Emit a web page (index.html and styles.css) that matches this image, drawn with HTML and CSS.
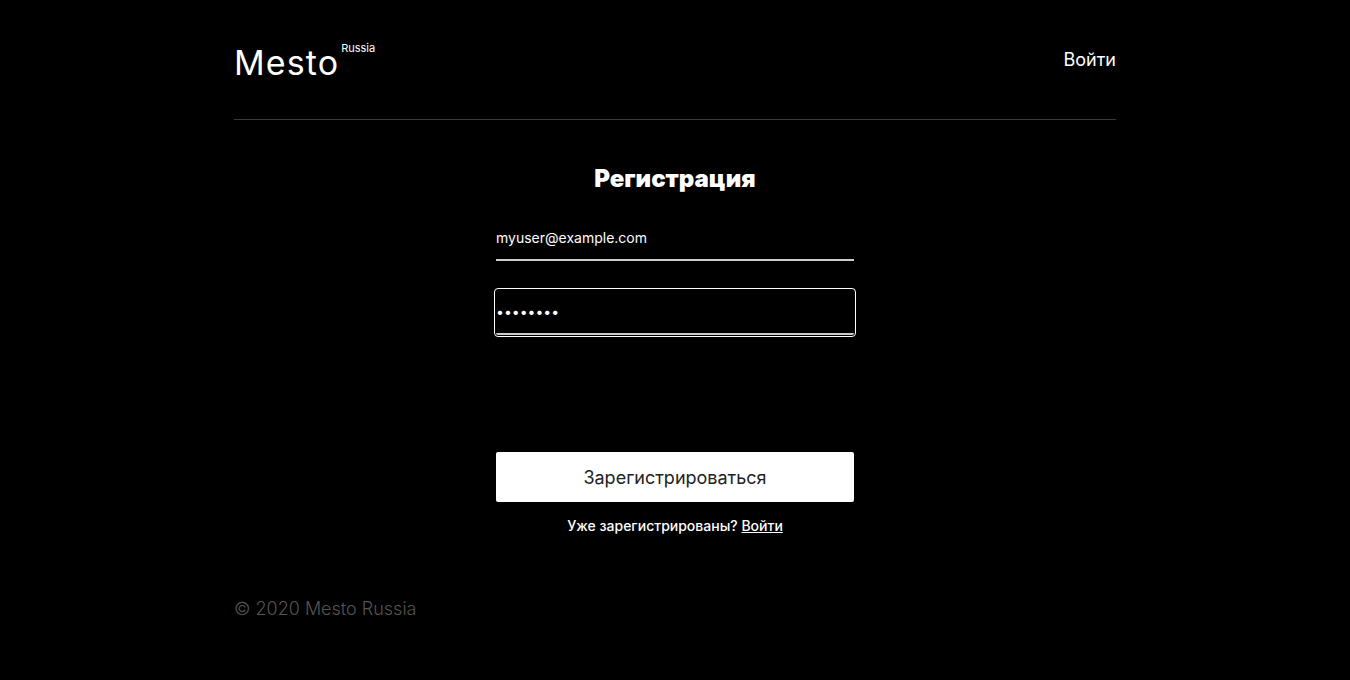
FILE: index.html
```html
<!DOCTYPE html>
<html lang="ru">
<head>
<meta charset="utf-8">
<title>Mesto Russia</title>
<link rel="stylesheet" href="styles.css">
</head>
<body>
<div class="page">
  <header class="header">
    <div class="logo">
      <span class="logo__main">Mesto</span><span class="logo__sub">Russia</span>
    </div>
    <a class="header__link" href="#">Войти</a>
  </header>
  <main class="auth">
    <h1 class="auth__title">Регистрация</h1>
    <form class="auth__form">
      <input class="auth__input" type="email" value="myuser@example.com">
      <input class="auth__input auth__input_focused" type="password" value="12345678">
      <button class="auth__button" type="button">Зарегистрироваться</button>
    </form>
    <p class="auth__hint">Уже зарегистрированы? <a class="auth__hint-link" href="#">Войти</a></p>
  </main>
  <footer class="footer">© 2020 Mesto Russia</footer>
</div>
</body>
</html>
```
FILE: styles.css
```css
html, body {
  margin: 0;
  padding: 0;
  background: #000;
  color: #fff;
  font-family: Inter, "Noto Sans", sans-serif;
}
.page {
  width: 882px;
  margin: 0 auto;
  display: flex;
  flex-direction: column;
}
.header {
  height: 120px;
  border-bottom: 1px solid rgba(84, 84, 84, 0.7);
  display: flex;
  justify-content: space-between;
  align-items: flex-start;
  box-sizing: border-box;
  padding-top: 41px;
}
.logo {
  display: flex;
  align-items: flex-start;
  margin-top: 1px;
}
.logo__main {
  font-size: 34px;
  line-height: 41px;
  letter-spacing: 1.1px;
}
.logo__sub {
  font-size: 11px;
  line-height: 13px;
  margin-left: 2px;
  margin-top: 0;
}
.header__link {
  color: #fff;
  text-decoration: none;
  font-size: 18px;
  line-height: 22px;
  margin-top: 8px;
}
.auth {
  width: 358px;
  margin: 0 auto;
  display: flex;
  flex-direction: column;
  align-items: center;
}
.auth__title {
  margin: 44px 0 0;
  font-size: 24px;
  line-height: 29px;
  font-weight: 900;
}
.auth__form {
  width: 100%;
  display: flex;
  flex-direction: column;
  margin-top: 23px;
}
.auth__input {
  box-sizing: border-box;
  width: 100%;
  height: 45px;
  background: transparent;
  border: none;
  border-bottom: 2px solid #ccc;
  color: #fff;
  font-family: Inter, "Noto Sans", sans-serif;
  font-size: 14px;
  padding: 0;
  margin: 0 0 29px;
  outline: none;
}
.auth__input_focused {
  outline: 1px solid #fff;
  outline-offset: 1px;
  border-radius: 2px;
}
.auth__button {
  margin-top: 88px;
  height: 50px;
  width: 100%;
  background: #fff;
  color: #222;
  border: none;
  border-radius: 2px;
  font-family: Inter, "Noto Sans", sans-serif;
  font-size: 18px;
  font-weight: 400;
  padding: 0;
}
.auth__hint {
  margin: 15px 0 0;
  font-size: 14px;
  line-height: 17px;
  font-weight: 500;
}
.auth__hint-link {
  color: #fff;
}
.footer {
  margin-top: 64px;
  font-size: 18px;
  line-height: 22px;
  font-weight: 300;
  color: #545454;
}
```
